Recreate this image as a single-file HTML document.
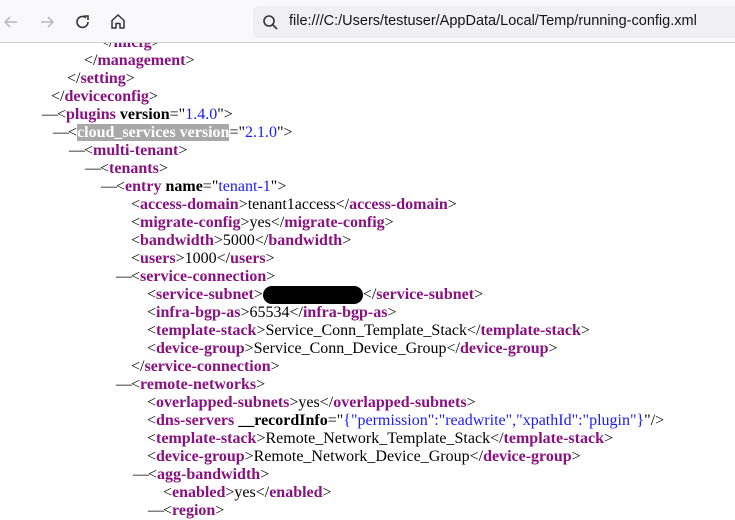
<!DOCTYPE html>
<html><head><meta charset="utf-8"><style>
body{margin:0;width:735px;height:510px;overflow:hidden;background:#fff;position:relative;font-family:"Liberation Serif",serif;font-size:16px}
.bar{position:absolute;left:0;top:0;width:735px;height:42px;background:#f9f9fb;border-bottom:1px solid #d0d0d4;z-index:2}
.url{position:absolute;left:253px;top:6px;width:490px;height:32px;background:#f0f0f4;border-radius:6px}
.url span{position:absolute;left:36px;top:7px;font-family:"Liberation Sans",sans-serif;font-size:14.5px;color:#15141a}
.l{position:absolute;white-space:pre;line-height:18px;color:#000;margin-top:2px}
.t{color:#881280;font-weight:bold}
.a{font-weight:bold}
.v{color:#1a1aff}
.d{position:absolute;left:-15px;top:0;font-weight:normal}
.sel{background:#a8a8a8;color:#fff;font-weight:bold}
</style></head><body>
<div class="bar">
<svg style="position:absolute;left:2px;top:13px" width="18" height="18" viewBox="0 0 18 18"><path d="M15 9H3M8 4L3 9l5 5" stroke="#b8b8bc" stroke-width="1.5" fill="none"/></svg>
<svg style="position:absolute;left:38px;top:13px" width="18" height="18" viewBox="0 0 18 18"><path d="M3 9h12M10 4l5 5-5 5" stroke="#b8b8bc" stroke-width="1.5" fill="none"/></svg>
<svg style="position:absolute;left:74px;top:13px" width="18" height="18" viewBox="0 0 18 18"><path d="M14 9a5.5 5.5 0 1 1-2-4.3" stroke="#333" stroke-width="1.6" fill="none"/><path d="M10 3h4v4" stroke="#333" stroke-width="1.6" fill="none"/></svg>
<svg style="position:absolute;left:109px;top:12px" width="18" height="18" viewBox="0 0 18 18"><path d="M3 8.5L9 3l6 5.5V16H11v-4.5H7V16H3z" stroke="#333" stroke-width="1.5" fill="none" stroke-linejoin="round"/></svg>
<div class="url"><svg style="position:absolute;left:9px;top:8px" width="17" height="17" viewBox="0 0 17 17"><circle cx="7" cy="7" r="5" stroke="#333" stroke-width="1.6" fill="none"/><path d="M10.5 10.5L15 15" stroke="#333" stroke-width="1.6"/></svg><span>file:///C:/Users/testuser/AppData/Local/Temp/running-config.xml</span></div>
</div>
<div class="l" style="left:100px;top:32px">&lt;/<span class="t">mlcfg</span>&gt;</div>
<div class="l" style="left:84px;top:50px">&lt;/<span class="t">management</span>&gt;</div>
<div class="l" style="left:67px;top:68px">&lt;/<span class="t">setting</span>&gt;</div>
<div class="l" style="left:51px;top:86px">&lt;/<span class="t">deviceconfig</span>&gt;</div>
<div class="l" style="left:57px;top:104px"><span class="d">—</span>&lt;<span class="t">plugins</span> <span class="a">version</span>="<span class="v">1.4.0</span>"&gt;</div>
<div class="l" style="left:68px;top:122px"><span class="d">—</span>&lt;<span class="sel">cloud_services version</span>="<span class="v">2.1.0</span>"&gt;</div>
<div class="l" style="left:84px;top:140px"><span class="d">—</span>&lt;<span class="t">multi-tenant</span>&gt;</div>
<div class="l" style="left:100px;top:158px"><span class="d">—</span>&lt;<span class="t">tenants</span>&gt;</div>
<div class="l" style="left:116px;top:176px"><span class="d">—</span>&lt;<span class="t">entry</span> <span class="a">name</span>="<span class="v">tenant-1</span>"&gt;</div>
<div class="l" style="left:131px;top:194px">&lt;<span class="t">access-domain</span>&gt;tenant1access&lt;/<span class="t">access-domain</span>&gt;</div>
<div class="l" style="left:131px;top:212px">&lt;<span class="t">migrate-config</span>&gt;yes&lt;/<span class="t">migrate-config</span>&gt;</div>
<div class="l" style="left:131px;top:230px">&lt;<span class="t">bandwidth</span>&gt;5000&lt;/<span class="t">bandwidth</span>&gt;</div>
<div class="l" style="left:131px;top:248px">&lt;<span class="t">users</span>&gt;1000&lt;/<span class="t">users</span>&gt;</div>
<div class="l" style="left:131px;top:266px"><span class="d">—</span>&lt;<span class="t">service-connection</span>&gt;</div>
<div class="l" style="left:147px;top:284px">&lt;<span class="t">service-subnet</span>&gt;<span style="display:inline-block;width:100px;height:18px;vertical-align:top;background:#000;border-radius:10px;transform:translateY(0px)"></span>&lt;/<span class="t">service-subnet</span>&gt;</div>
<div class="l" style="left:147px;top:302px">&lt;<span class="t">infra-bgp-as</span>&gt;65534&lt;/<span class="t">infra-bgp-as</span>&gt;</div>
<div class="l" style="left:147px;top:320px">&lt;<span class="t">template-stack</span>&gt;Service_Conn_Template_Stack&lt;/<span class="t">template-stack</span>&gt;</div>
<div class="l" style="left:147px;top:338px">&lt;<span class="t">device-group</span>&gt;Service_Conn_Device_Group&lt;/<span class="t">device-group</span>&gt;</div>
<div class="l" style="left:131px;top:356px">&lt;/<span class="t">service-connection</span>&gt;</div>
<div class="l" style="left:131px;top:374px"><span class="d">—</span>&lt;<span class="t">remote-networks</span>&gt;</div>
<div class="l" style="left:147px;top:392px">&lt;<span class="t">overlapped-subnets</span>&gt;yes&lt;/<span class="t">overlapped-subnets</span>&gt;</div>
<div class="l" style="left:147px;top:410px">&lt;<span class="t">dns-servers</span> <span class="a">__recordInfo</span>="<span class="v">{"permission":"readwrite","xpathId":"plugin"}</span>"/&gt;</div>
<div class="l" style="left:147px;top:428px">&lt;<span class="t">template-stack</span>&gt;Remote_Network_Template_Stack&lt;/<span class="t">template-stack</span>&gt;</div>
<div class="l" style="left:147px;top:446px">&lt;<span class="t">device-group</span>&gt;Remote_Network_Device_Group&lt;/<span class="t">device-group</span>&gt;</div>
<div class="l" style="left:148px;top:464px"><span class="d">—</span>&lt;<span class="t">agg-bandwidth</span>&gt;</div>
<div class="l" style="left:163px;top:482px">&lt;<span class="t">enabled</span>&gt;yes&lt;/<span class="t">enabled</span>&gt;</div>
<div class="l" style="left:163px;top:500px"><span class="d">—</span>&lt;<span class="t">region</span>&gt;</div>
</body></html>
